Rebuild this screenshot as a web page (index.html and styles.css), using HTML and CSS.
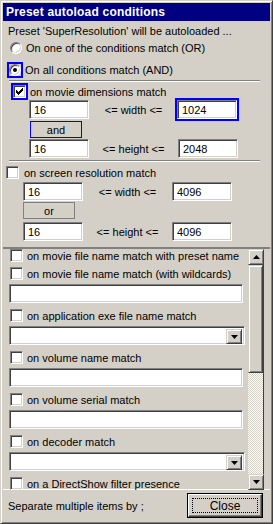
FILE: index.html
```html
<!DOCTYPE html>
<html>
<head>
<meta charset="utf-8">
<link rel="stylesheet" href="styles.css">
</head>
<body>
<div class="window">
  <div class="titlebar">Preset autoload conditions</div>
  <div class="client">
    <div class="intro">Preset 'SuperResolution' will be autoloaded ...</div>
    <div class="radio-row r1"><span class="radio"></span><span class="lbl">On one of the conditions match (OR)</span></div>
    <div class="radio-row r2"><span class="focus"><span class="radio checked"></span></span><span class="lbl">On all conditions match (AND)</span></div>
    <div class="sep"></div>

    <div class="group dims">
      <div class="check-row"><span class="focus"><span class="check"><svg width="11" height="11" viewBox="1 1 11 11"><path d="M9 3h1v1h-1z M8 4h2v1h-2z M3 5h1v1h-1z M7 5h3v1h-3z M3 6h2v1h-2z M6 6h3v1h-3z M3 7h5v1h-5z M4 8h3v1h-3z M5 9h1v1h-1z" fill="#000"/></svg></span></span><span class="lbl">on movie dimensions match</span></div>
      <div class="range-row"><span class="edit small">16</span><span class="op">&lt;= width &lt;=</span><span class="edit-focus"><span class="edit small">1024</span></span></div>
      <div class="btn-row"><span class="mini-btn blue">and</span></div>
      <div class="range-row"><span class="edit small">16</span><span class="op">&lt;= height &lt;=</span><span class="edit small">2048</span></div>
    </div>
    <div class="sep"></div>

    <div class="group screen">
      <div class="check-row"><span class="check"></span><span class="lbl">on screen resolution match</span></div>
      <div class="range-row"><span class="edit small">16</span><span class="op">&lt;= width &lt;=</span><span class="edit small">4096</span></div>
      <div class="btn-row"><span class="mini-btn">or</span></div>
      <div class="range-row"><span class="edit small">16</span><span class="op">&lt;= height &lt;=</span><span class="edit small">4096</span></div>
    </div>

    <div class="panel">
      <div class="panel-content">
        <div class="item"><span class="check"></span><span class="lbl">on movie file name match with preset name</span></div>
        <div class="item"><span class="check"></span><span class="lbl">on movie file name match (with wildcards)</span></div>
        <div class="edit wide"></div>
        <div class="item gap"><span class="check"></span><span class="lbl">on application exe file name match</span></div>
        <div class="combo"><span class="combo-btn"><svg width="7" height="4" viewBox="0 0 7 4"><path d="M0 0h7l-3.5 4z" fill="#000"/></svg></span></div>
        <div class="item gap"><span class="check"></span><span class="lbl">on volume name match</span></div>
        <div class="edit wide"></div>
        <div class="item gap"><span class="check"></span><span class="lbl">on volume serial match</span></div>
        <div class="edit wide"></div>
        <div class="item gap"><span class="check"></span><span class="lbl">on decoder match</span></div>
        <div class="combo"><span class="combo-btn"><svg width="7" height="4" viewBox="0 0 7 4"><path d="M0 0h7l-3.5 4z" fill="#000"/></svg></span></div>
        <div class="item gap"><span class="check"></span><span class="lbl">on a DirectShow filter presence</span></div>
        <div class="edit wide"></div>
      </div>
      <div class="scrollbar">
        <span class="sb-btn"><svg width="7" height="4" viewBox="0 0 7 4"><path d="M3.5 0l3.5 4h-7z" fill="#000"/></svg></span>
        <span class="sb-thumb"></span>
        <span class="sb-track"></span>
        <span class="sb-btn"><svg width="7" height="4" viewBox="0 0 7 4"><path d="M0 0h7l-3.5 4z" fill="#000"/></svg></span>
      </div>
    </div>

    <div class="footer">
      <span class="hint">Separate multiple items by ;</span>
      <span class="close-btn"><span class="close-inner"><span class="close-focus">Close</span></span></span>
    </div>
  </div>
</div>
</body>
</html>
```

FILE: styles.css
```css
* { box-sizing: border-box; }
html, body { margin: 0; padding: 0; background: #d4d0c8; }
body { font-family: "Liberation Sans", Arial, sans-serif; font-size: 11px; color: #000; }

.window {
  width: 273px; height: 524px;
  border: 1px solid; border-color: #d4d0c8 #404040 #404040 #d4d0c8;
  box-shadow: inset 1px 1px #fff, inset -1px -1px #808080;
  padding: 2px;
  display: flex; flex-direction: column;
  background: #d4d0c8;
}
.titlebar {
  height: 18px; flex: none;
  background: #000080; color: #fff;
  font-weight: bold; font-size: 12px; letter-spacing: 0.2px;
  line-height: 18px; padding-left: 3px;
}
.client { flex: 1; display: flex; flex-direction: column; min-height: 0; }

.intro { margin-top: 4px; padding-left: 5px; line-height: 13px; height: 13px; }

.radio-row { display: flex; align-items: center; height: 16px; }
.radio-row.r1 { margin-top: 2px; padding-left: 7px; }
.radio-row.r2 { margin-top: 6px; padding-left: 4px; }
.radio-row .lbl { margin-left: 4px; }
.radio-row.r2 .lbl { margin-left: 2px; }
.radio {
  display: inline-block; width: 12px; height: 12px; border-radius: 50%;
  border: 1px solid; border-color: #808080 #fff #fff #808080;
  box-shadow: inset 1px 1px #404040, inset -1px -1px #d4d0c8;
  background: #fff; position: relative; flex: none;
}
.radio.checked::after {
  content: ""; position: absolute; left: 3px; top: 3px; width: 4px; height: 4px;
  border-radius: 50%; background: #000;
}
.focus { display: inline-flex; border: 2px solid #0000ff; flex: none; }

.sep { height: 2px; border-top: 1px solid #808080; border-bottom: 1px solid #fff; margin: 2px 10px 0 6px; flex: none; }

.group { display: flex; flex-direction: column; }
.check-row { display: flex; align-items: center; height: 17px; }
.dims { padding-left: 8px; margin-top: 1px; }
.dims .check-row .lbl { margin-left: 2px; }
.screen { padding-left: 3px; margin-top: 4px; }
.screen .check-row { height: 13px; }
.screen .check-row .lbl { margin-left: 5px; }

.check {
  display: inline-flex; align-items: center; justify-content: center;
  width: 13px; height: 13px; flex: none;
  border: 1px solid; border-color: #808080 #fff #fff #808080;
  box-shadow: inset 1px 1px #404040, inset -1px -1px #d4d0c8;
  background: #fff;
}
.check svg { display: block; }

.edit {
  display: flex; align-items: center;
  border: 1px solid; border-color: #808080 #fff #fff #808080;
  box-shadow: inset 1px 1px #404040, inset -1px -1px #d4d0c8;
  background: #fff; padding-left: 4px; flex: none;
}
.edit.small { width: 60px; height: 19px; }

.range-row { display: flex; align-items: center; height: 19px; }
.dims .range-row { margin-left: 18px; }
.screen .range-row { margin-left: 17px; }
.range-row .op { width: 89px; text-align: center; flex: none; }
.dims .range-row:first-of-type { margin-top: 1px; }
.screen .range-row { margin-top: 3px; }
.edit-focus { display: inline-flex; border: 2px solid #0000ff; margin: -2px 0 -2px -3px; padding: 0; }

.btn-row { display: flex; height: 17px; margin-top: 2px; margin-bottom: 1px; }
.dims .btn-row { margin-left: 19px; }
.screen .btn-row { margin-left: 17px; margin-top: 1px; margin-bottom: 0; }
.mini-btn {
  width: 52px; height: 17px; display: flex; align-items: center; justify-content: center;
  border: 1px solid #808080; background: #d4d0c8;
}
.mini-btn.blue { border-color: #0000ff; }

.panel {
  margin-top: 6px; height: 243px; flex: none;
  border-top: 2px solid; border-top-color: #808080;
  box-shadow: 0 -1px 0 #fff inset;
  display: flex; overflow: hidden;
}
.panel-content { width: 244px; padding-left: 6px; overflow: hidden; flex: none; }
.item { display: flex; align-items: center; height: 13px; margin-top: 5px; padding-left: 1px; }
.item:first-child { margin-top: 0; }
.item .lbl { margin-left: 4px; white-space: nowrap; }
.item.gap { margin-top: 6px; }
.edit.wide { width: 234px; height: 19px; margin-top: 4px; }
.combo {
  width: 236px; height: 19px; margin-top: 4px;
  border: 1px solid; border-color: #808080 #fff #fff #808080;
  box-shadow: inset 1px 1px #404040, inset -1px -1px #d4d0c8;
  background: #fff; display: flex; justify-content: flex-end; padding: 2px;
}
.combo-btn, .sb-btn {
  width: 16px; height: 16px; display: flex; align-items: center; justify-content: center;
  border: 1px solid; border-color: #d4d0c8 #404040 #404040 #d4d0c8;
  box-shadow: inset 1px 1px #fff, inset -1px -1px #808080;
  background: #d4d0c8; flex: none;
}
.combo-btn { height: 15px; }
.scrollbar { width: 16px; margin-left: 1px; display: flex; flex-direction: column; border-right: 1px solid #404040; }
.sb-btn { height: 16px; }
.sb-thumb {
  height: 108px; flex: none;
  border: 1px solid; border-color: #d4d0c8 #404040 #404040 #d4d0c8;
  box-shadow: inset 1px 1px #fff, inset -1px -1px #808080;
  background: #d4d0c8;
}
.sb-track { flex: 1; background: repeating-conic-gradient(#d4d0c8 0 25%, #fff 0 50%) 0 0 / 2px 2px; }

.footer { display: flex; align-items: center; justify-content: space-between; flex: 1; padding: 0 7px 0 5px; }
.close-btn { width: 76px; height: 25px; border: 1px solid #000; display: flex; }
.close-inner {
  flex: 1; display: flex; padding: 3px;
  border: 1px solid; border-color: #fff #404040 #404040 #fff;
  box-shadow: inset -1px -1px #808080;
}
.close-focus { flex: 1; border: 1px dotted #000; display: flex; align-items: center; justify-content: center; font-size: 12px; }
```
